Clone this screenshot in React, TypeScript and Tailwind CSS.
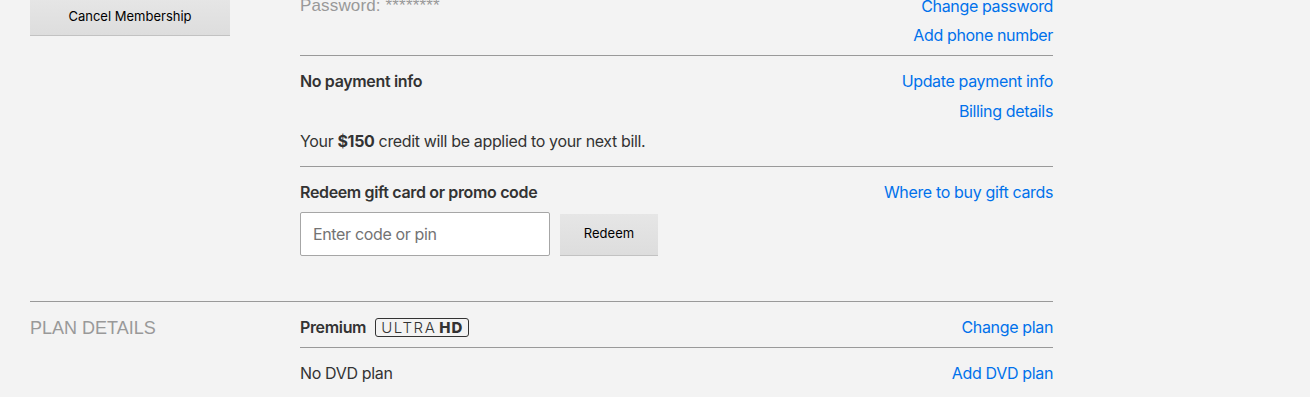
import React from "react";

const Link = ({ children }: { children: React.ReactNode }) => (
  <a className="text-[#0071eb] leading-6 whitespace-nowrap cursor-pointer">{children}</a>
);

export default function App() {
  return (
    <div
      className="h-[397px] w-[1310px] overflow-hidden bg-[#f3f3f3] text-[16px] text-[#333] tracking-[-0.35px]"
      style={{ fontFamily: "Inter, 'Noto Sans', Arial, sans-serif" }}
    >
      <div className="w-[1023px] ml-[30px]">
        {/* membership section */}
        <div className="grid grid-cols-[270px_1fr]">
          <div>
            <button className="-mt-[2px] h-[37px] w-[200px] bg-gradient-to-b from-[#e6e6e6] to-[#dddddd] text-[13px] tracking-normal text-black shadow-[0_1px_0_rgba(0,0,0,0.2)]">
              Cancel Membership
            </button>
          </div>
          <div className="-mt-[6px]">
            <div className="flex justify-between h-6 leading-6">
              <span
                className="text-[#999] text-[17px] tracking-[0.15px]"
                style={{ fontFamily: "'Liberation Sans', Arial, sans-serif" }}
              >
                Password: ********
              </span>
              <Link>Change password</Link>
            </div>
            <div className="flex justify-end h-6 mt-[5px]">
              <Link>Add phone number</Link>
            </div>
            <div className="mt-[8px] h-px bg-[#999]" />
            <div className="mt-[13px] flex justify-between h-6 leading-6">
              <span className="font-semibold">No payment info</span>
              <Link>Update payment info</Link>
            </div>
            <div className="mt-[6px] flex justify-end h-6">
              <Link>Billing details</Link>
            </div>
            <div className="mt-[6px] h-6 leading-6">
              Your <b className="font-bold">$150</b> credit will be applied to your next bill.
            </div>
            <div className="mt-[13px] h-px bg-[#999]" />
            <div className="mt-[13px] flex justify-between h-6 leading-6">
              <span className="font-semibold">Redeem gift card or promo code</span>
              <Link>Where to buy gift cards</Link>
            </div>
            <div className="mt-[8px] flex items-center">
              <div className="h-[44px] w-[250px] rounded-[2px] border border-[#a6a6a6] bg-white pl-[12px] flex items-center text-[#737373]">
                Enter code or pin
              </div>
              <button className="ml-[10px] h-[41px] w-[98px] bg-gradient-to-b from-[#e6e6e6] to-[#dddddd] text-[13px] tracking-normal text-black shadow-[0_1px_0_rgba(0,0,0,0.2)]">
                Redeem
              </button>
            </div>
          </div>
        </div>
        {/* plan details */}
        <div className="mt-[45px] border-t border-[#999] grid grid-cols-[270px_1fr]">
          <div
            className="mt-[14px] text-[18px] leading-6 text-[#999] uppercase tracking-normal"
            style={{ fontFamily: "'Liberation Sans', Arial, sans-serif" }}
          >
            Plan Details
          </div>
          <div>
            <div className="mt-[13px] flex justify-between items-center h-6">
              <div className="flex items-center">
                <span className="font-semibold">Premium</span>
                <span className="ml-[9px] inline-flex items-center h-[19px] px-[5px] border-[1.5px] border-[#333] rounded-[3px] text-[15px] leading-none tracking-[1.6px]">
                  <span className="font-light">ULTRA</span>
                  <span className="ml-[3px] font-extrabold tracking-[1px]">HD</span>
                </span>
              </div>
              <Link>Change plan</Link>
            </div>
            <div className="mt-[8px] h-px bg-[#999]" />
            <div className="mt-[13px] flex justify-between h-6 leading-6">
              <span>No DVD plan</span>
              <Link>Add DVD plan</Link>
            </div>
          </div>
        </div>
      </div>
    </div>
  );
}
